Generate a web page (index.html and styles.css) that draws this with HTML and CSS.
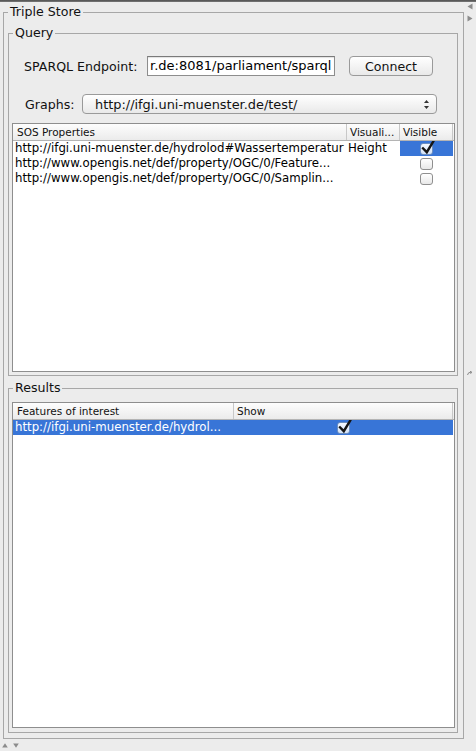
FILE: index.html
```html
<!DOCTYPE html>
<html>
<head>
<meta charset="utf-8">
<link rel="stylesheet" href="styles.css">
</head>
<body>
<div class="topline"></div>
<div class="main">
  <div class="content">
    <section class="group outer">
      <div class="group-title outer-title">Triple Store</div>
      <section class="group query">
        <div class="group-title">Query</div>
        <div class="form-row endpoint-row">
          <span class="label endpoint-label">SPARQL Endpoint:</span>
          <div class="textfield">r.de:8081/parliament/sparql</div>
          <button class="btn">Connect</button>
        </div>
        <div class="form-row graphs-row">
          <span class="label graphs-label">Graphs:</span>
          <div class="combo">
            <span class="combo-text">http://ifgi.uni-muenster.de/test/</span>
            <svg class="combo-arrows" width="7" height="11" viewBox="0 0 7 11"><path d="M3.5 1 L6 4 L1 4 Z" fill="#333"/><path d="M1 7 L6 7 L3.5 10 Z" fill="#333"/></svg>
          </div>
        </div>
        <div class="table props">
          <div class="thead props-cols">
            <div class="th">SOS Properties</div>
            <div class="th th2">Visuali...</div>
            <div class="th th2">Visible</div>
            <div></div>
          </div>
          <div class="tr props-cols">
            <div class="td">http://ifgi.uni-muenster.de/hydrolod#Wassertemperatur</div>
            <div class="td td2">Height</div>
            <div class="td tdc sel"><span class="cb on"><svg viewBox="0 0 14 14"><path d="M1.2 7.5 L5.8 12.2 L12.8 0.6" fill="none" stroke="#151515" stroke-width="2.4"/></svg></span></div>
            <div></div>
          </div>
          <div class="tr props-cols">
            <div class="td">http://www.opengis.net/def/property/OGC/0/Feature...</div>
            <div class="td td2"></div>
            <div class="td tdc"><span class="cb"></span></div>
            <div></div>
          </div>
          <div class="tr props-cols">
            <div class="td">http://www.opengis.net/def/property/OGC/0/Samplin...</div>
            <div class="td td2"></div>
            <div class="td tdc"><span class="cb"></span></div>
            <div></div>
          </div>
        </div>
      </section>
      <section class="group results">
        <div class="group-title">Results</div>
        <div class="table res">
          <div class="thead res-cols">
            <div class="th">Features of interest</div>
            <div class="th th2">Show</div>
            <div></div>
          </div>
          <div class="tr res-cols">
            <div class="td sel">http://ifgi.uni-muenster.de/hydrol...</div>
            <div class="td tdc sel"><span class="cb on"><svg viewBox="0 0 14 14"><path d="M1.2 7.5 L5.8 12.2 L12.8 0.6" fill="none" stroke="#151515" stroke-width="2.4"/></svg></span></div>
            <div></div>
          </div>
        </div>
      </section>
    </section>
  </div>
  <div class="splitter">
    <svg class="sp-arrow first" width="6" height="7" viewBox="0 0 6 7"><path d="M5.5 0.5 L5.5 6.5 L0.5 3.5 Z" fill="#8c8c8c"/></svg>
    <svg class="sp-arrow" width="6" height="7" viewBox="0 0 6 7"><path d="M0.5 0.5 L0.5 6.5 L5.5 3.5 Z" fill="#8c8c8c"/></svg>
    <svg class="grip" width="6" height="5" viewBox="0 0 6 5"><path d="M0.5 4 Q1 1 4 1.2 M3 0.2 L5 1.3 L3.4 2.6" fill="none" stroke="#8a8a8a" stroke-width="1"/></svg>
  </div>
</div>
<div class="bottombar">
  <svg width="6" height="5" viewBox="0 0 6 5"><path d="M3 0.3 L5.8 4.6 L0.2 4.6 Z" fill="#8c8c8c"/></svg>
  <svg width="6" height="5" viewBox="0 0 6 5"><path d="M0.2 0.4 L5.8 0.4 L3 4.7 Z" fill="#8c8c8c"/></svg>
</div>
</body>
</html>
```
FILE: styles.css
```css
html, body {
  margin: 0;
  padding: 0;
}
body {
  width: 476px;
  height: 751px;
  overflow: hidden;
  background: #ececec;
  font-family: "DejaVu Sans", "Verdana", sans-serif;
  color: #000;
}
.topline {
  height: 2px;
  background: linear-gradient(#4f4f4f, #7a7a7a);
}
.main {
  display: flex;
  height: 738px;
}
.content {
  width: 464px;
}
.group {
  border: 1px solid #a7a7a7;
  box-sizing: border-box;
  display: flex;
  flex-direction: column;
}
.group-title {
  align-self: flex-start;
  margin: -9px 0 0 1px;
  padding: 0 2px;
  background: #ececec;
  font-size: 12.6px;
  line-height: 16px;
  color: #111;
  white-space: nowrap;
}
.outer-title {
  margin-left: 0;
}
.outer {
  margin: 10px 0 0 3px;
  width: 461px;
  height: 727px;
  padding: 0 5px 5px 4px;
}
.query {
  margin-top: 13px;
  height: 343px;
  padding: 0 2px 3px 3px;
}
.results {
  margin-top: 12px;
  flex: 1;
  padding: 0 2px 4px 3px;
}
.form-row {
  display: flex;
  align-items: center;
}
.label {
  font-size: 12.6px;
  color: #111;
  white-space: nowrap;
}
.endpoint-row {
  margin-top: 15px;
  height: 20px;
  padding-left: 12px;
}
.endpoint-label {
  width: 123px;
}
.textfield {
  width: 188px;
  height: 20px;
  box-sizing: border-box;
  border: 1px solid #8d8d8d;
  border-top-color: #7a7a7a;
  background: #fff;
  padding-left: 2px;
  font-size: 13px;
  line-height: 18px;
  white-space: nowrap;
  overflow: hidden;
  box-shadow: inset 0 1px 1px rgba(0, 0, 0, 0.12);
}
.btn {
  margin-left: 14px;
  width: 84px;
  height: 20px;
  padding: 0;
  box-sizing: border-box;
  border: 1px solid #9a9a9a;
  border-radius: 4px;
  background: linear-gradient(#ffffff, #f4f4f4 50%, #e9e9e9);
  font-family: "DejaVu Sans", sans-serif;
  font-size: 12.6px;
  color: #111;
}
.graphs-row {
  margin-top: 18px;
  height: 20px;
  padding-left: 13px;
}
.graphs-label {
  width: 57px;
}
.combo {
  width: 355px;
  height: 20px;
  box-sizing: border-box;
  border: 1px solid #9a9a9a;
  border-radius: 4px;
  background: linear-gradient(#ffffff, #f4f4f4 50%, #e9e9e9);
  display: flex;
  align-items: center;
  justify-content: space-between;
  padding: 0 6px 0 12px;
}
.combo-text {
  font-size: 12.9px;
  color: #111;
  white-space: nowrap;
}
.table {
  flex: 1;
  border: 1px solid #8e8e8e;
  background: #fff;
}
.props {
  margin-top: 9px;
}
.res {
  margin-top: 6px;
}
.props-cols {
  grid-template-columns: 334px 53px 53px 1fr;
}
.res-cols {
  grid-template-columns: 221px 219px 1fr;
}
.thead {
  display: grid;
  height: 16px;
  border-bottom: 1px solid #b4b4b4;
  background: linear-gradient(#fdfdfd, #ebebeb);
  font-size: 10.5px;
  line-height: 16px;
  color: #111;
}
.th {
  border-right: 1px solid #c8c8c8;
  padding-left: 4px;
  white-space: nowrap;
  overflow: hidden;
}
.th2 {
  padding-left: 3px;
}
.tr {
  display: grid;
  height: 15px;
  font-size: 11.75px;
  line-height: 15px;
}
.td {
  padding-left: 2px;
  white-space: nowrap;
  overflow: hidden;
}
.td2 {
  padding-left: 1px;
}
.tdc {
  padding-left: 0;
  display: flex;
  align-items: center;
  justify-content: center;
}
.sel {
  background: #3875d7;
  color: #fff;
}
.cb {
  position: relative;
  width: 13px;
  height: 12px;
  box-sizing: border-box;
  border: 1px solid #8f8f8f;
  border-radius: 3px;
  background: linear-gradient(#ffffff, #e8e8e8);
  margin-top: 1px;
}
.cb.on {
  border-color: #6d8fc0;
  background: linear-gradient(#f4f8ff, #d4e3f8);
}
.cb svg {
  position: absolute;
  left: -0.5px;
  top: -4px;
  width: 14px;
  height: 14px;
  overflow: visible;
}
.splitter {
  width: 12px;
  display: flex;
  flex-direction: column;
  align-items: center;
}
.sp-arrow.first {
  margin-top: 1px;
  margin-bottom: 5px;
}
.grip {
  margin-top: 349px;
}
.bottombar {
  height: 11px;
  display: flex;
  align-items: center;
  gap: 5px;
  padding-left: 2px;
}
```
